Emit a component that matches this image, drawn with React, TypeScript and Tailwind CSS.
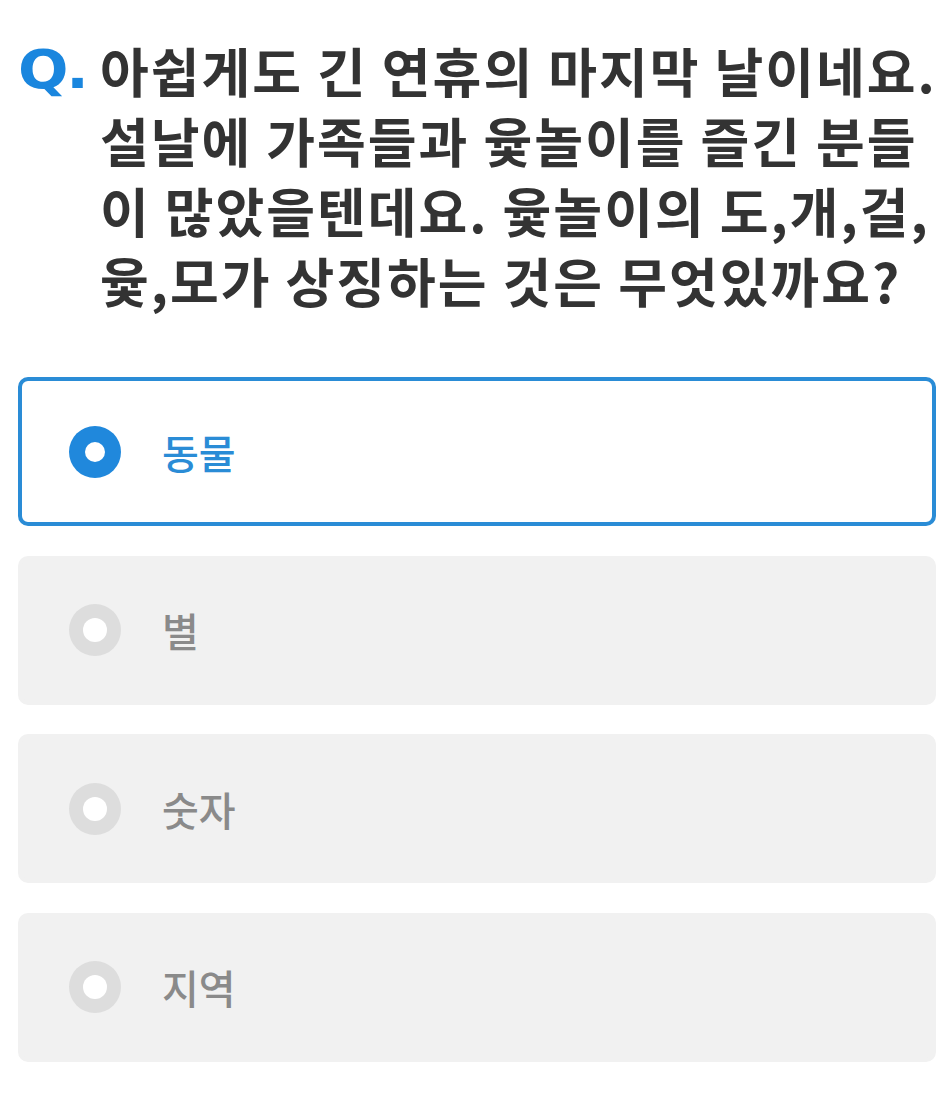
import React, { useState } from 'react';

const options = ['동물', '별', '숫자', '지역'];

const questionLines = [
    '아쉽게도 긴 연휴의 마지막 날이네요.',
    '설날에 가족들과 윷놀이를 즐긴 분들',
    '이 많았을텐데요. 윷놀이의 도,개,걸,',
    '윷,모가 상징하는 것은 무엇있까요?',
];

function Radio({ checked }: { checked: boolean }) {
    return (
        <div
            className={
                checked
                    ? 'w-[52px] h-[52px] rounded-full bg-[#2088dc] flex items-center justify-center shrink-0'
                    : 'w-[52px] h-[52px] rounded-full bg-[#dddddd] flex items-center justify-center shrink-0'
            }
        >
            <div className={checked ? 'w-[20px] h-[20px] rounded-full bg-white' : 'w-[24px] h-[24px] rounded-full bg-white'} />
        </div>
    );
}

export default function App() {
    const [selected, setSelected] = useState(0);

    return (
        <div className="min-h-[1109px] bg-white pl-[18px] pr-[14px] pt-[35px] font-['Noto_Sans_CJK_KR','Noto_Sans',sans-serif]">
            <div className="flex">
                <div className="w-[82px] shrink-0 h-[70px] flex items-center text-[#1a86de] font-['DejaVu_Sans',sans-serif] font-bold text-[54px] leading-none tracking-[-2px] scale-x-110 origin-left">
                    Q.
                </div>
                <div className="text-[#333333] text-[53px] leading-[70px] font-bold tracking-[2px] whitespace-nowrap">
                    {questionLines.map((line) => (
                        <div key={line}>{line}</div>
                    ))}
                </div>
            </div>

            <div className="mt-[62px] flex flex-col gap-[29.5px]">
                {options.map((opt, i) => {
                    const checked = selected === i;
                    return (
                        <button
                            key={opt}
                            onClick={() => setSelected(i)}
                            className={
                                checked
                                    ? 'h-[149px] rounded-[10px] border-[4px] border-[#2a8cd6] bg-white flex items-center pl-[47px] text-left'
                                    : 'h-[149px] rounded-[10px] border-[4px] border-[#f1f1f1] bg-[#f1f1f1] flex items-center pl-[47px] text-left'
                            }
                        >
                            <Radio checked={checked} />
                            <span
                                className={
                                    checked
                                        ? 'ml-[41px] text-[40px] font-medium text-[#2a8cd6]'
                                        : 'ml-[41px] text-[40px] font-medium text-[#8a8a8a]'
                                }
                            >
                                {opt}
                            </span>
                        </button>
                    );
                })}
            </div>
        </div>
    );
}
